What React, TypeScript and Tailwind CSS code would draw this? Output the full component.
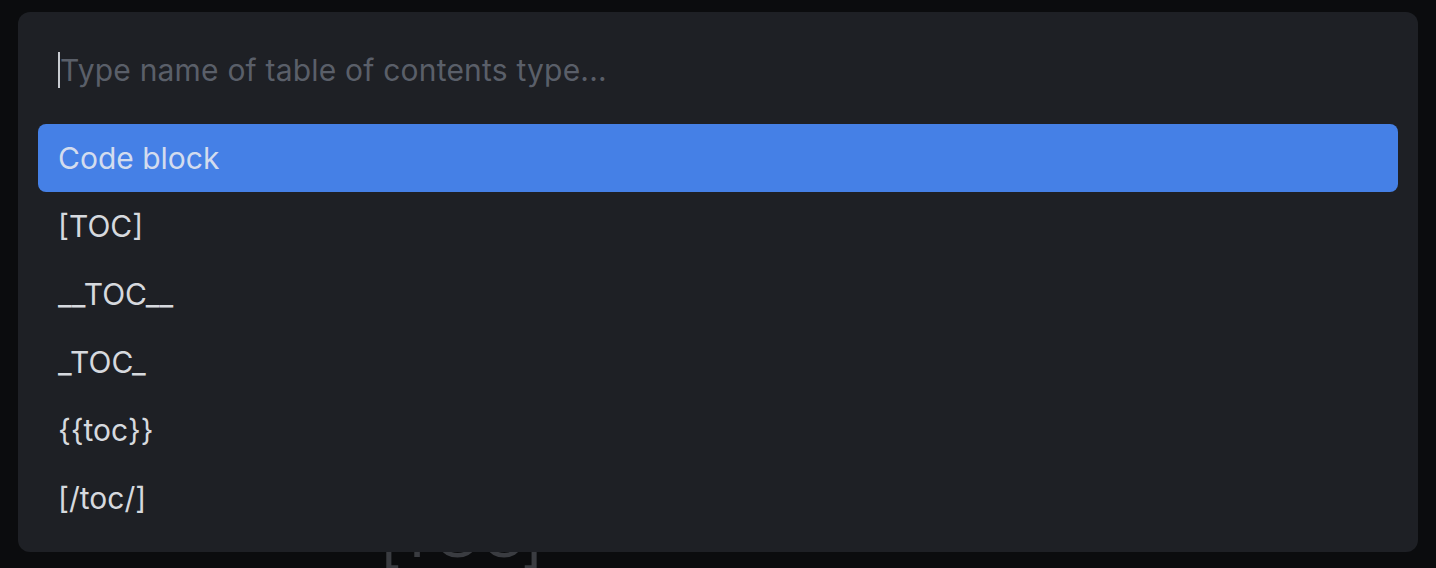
import React from "react";

const options = ["Code block", "[TOC]", "__TOC__", "_TOC_", "{{toc}}", "[/toc/]"];

export default function App() {
  const active = 0;

  return (
    <div className="relative h-[568px] w-[1436px] overflow-hidden bg-[#0b0c0e] font-['Inter',sans-serif]">
      {/* document underneath the palette */}
      <div className="pl-[382px] pt-[497px] font-['Liberation_Sans',sans-serif] text-[60px] leading-[80px] text-[#3a3c41]">
        [TOC]
      </div>

      {/* palette */}
      <div className="absolute left-[18px] top-[12px] flex w-[1400px] flex-col rounded-[12px] bg-[#1e2025] px-5 pb-5">
        <div className="flex h-[112px] items-center pl-5 pt-1">
          <span className="h-[36px] w-[2px] bg-[#c9ccd1]" />
          <span className="text-[30px] tracking-[0.2px] text-[#5a5f69]">
            Type name of table of contents type...
          </span>
        </div>
        <div className="flex flex-col">
          {options.map((opt, i) => (
            <div
              key={opt}
              className={
                i === active
                  ? "flex h-[68px] items-center rounded-[8px] bg-[#4580e6] px-5 text-[30px] text-[#d3dcee]"
                  : "flex h-[68px] items-center px-5 text-[30px] text-[#d6d9de]"
              }
            >
              {opt}
            </div>
          ))}
        </div>
      </div>
    </div>
  );
}
